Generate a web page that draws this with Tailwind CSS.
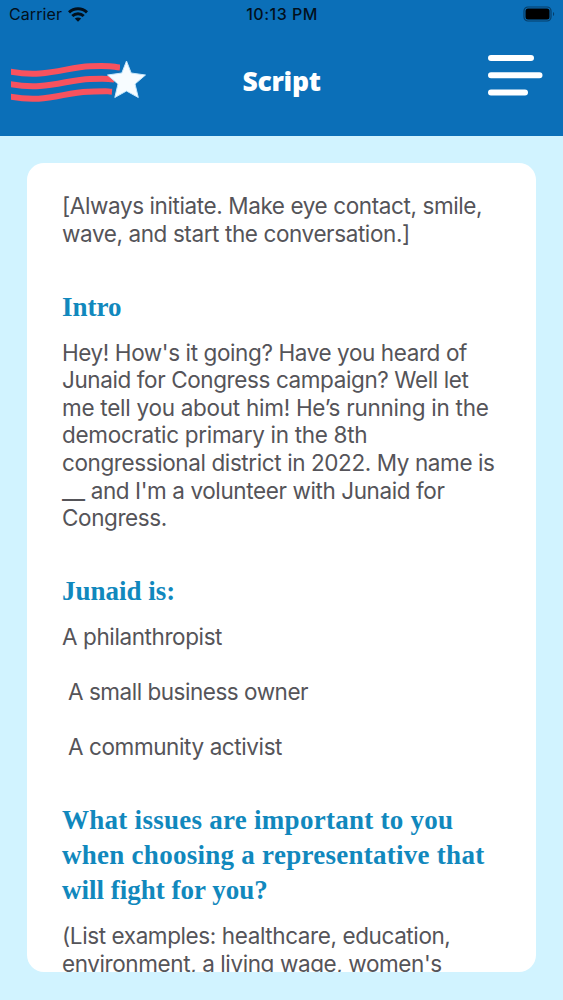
<!DOCTYPE html>
<html lang="en">
<head>
    <meta charset="UTF-8">
    <meta name="viewport" content="width=device-width, initial-scale=1.0">
    <title>Script</title>
    <script src="https://cdn.jsdelivr.net/npm/@tailwindcss/browser@4"></script>
</head>
<body class="h-screen flex flex-col overflow-hidden bg-[#d1f3ff] font-['Inter',sans-serif]">
    <header class="h-[136px] shrink-0 bg-[#0b6fb8]">
        <!-- Status bar -->
        <div class="h-7 grid grid-cols-3 items-center pl-[9px] pr-2 text-[#02101c]">
            <div class="flex items-center gap-[6px]">
                <span class="text-base tracking-[0.1px]">Carrier</span>
                <svg class="w-5 h-[15px]" viewBox="0 0 20 15" fill="none" stroke="currentColor" stroke-width="3">
                    <path d="M1 5.3C6 .5 14 .5 19 5.3"/>
                    <path d="M4.300 9c3.200-3.100 8.200-3.100 11.400 0"/>
                    <path d="M10 14.800 6.800 11.600c1.800-1.600 4.600-1.600 6.400 0z" fill="currentColor" stroke="none"/>
                </svg>
            </div>
            <span class="text-center text-base font-medium tracking-[0.5px] whitespace-nowrap">10:13 PM</span>
            <svg class="w-8 h-4 justify-self-end" viewBox="0 0 32 16">
                <rect x="1" y="1" width="27" height="14" rx="4" fill="none" stroke="#063e69" stroke-width="1.2"/>
                <rect x="2.5" y="2.5" width="24" height="11" rx="2.5"/>
                <path d="M30 6c1.6.6 1.6 3.4 0 4z" fill="#063e69"/>
            </svg>
        </div>
        <!-- Nav bar -->
        <div class="h-[108px] grid grid-cols-[150px_1fr_150px] items-start pt-[27px]">
            <svg class="w-[150px] h-[52px]" viewBox="0 55 150 52">
                <clipPath id="flag"><path d="M11 55h109v52H11z"/></clipPath>
                <g fill="none" stroke="#f8525e" stroke-width="6" clip-path="url(#flag)">
                    <path d="M7 71C45 79 66 67 90 66.300S110 66.300 120 67.500"/>
                    <path d="M7 83.500C45 91.500 66 79.500 90 79S104 79 114 79.500"/>
                    <path d="M7 96C45 104 62 92.500 88 91.700S104 91.200 112 91.800"/>
                </g>
                <path d="M126.500 61 131.200 73 145.500 75 135 84 138.300 97.500 126.500 91 114.800 97.500 118 84 107.500 75 121.800 73z" fill="#f7fcff" stroke="#c4e6fb" stroke-linejoin="round"/>
            </svg>
            <h1 class="pt-[8px] text-center font-['Open_Sans',sans-serif] text-[26.5px] leading-[36px] font-extrabold tracking-[-0.3px] text-white">Script</h1>
            <svg class="w-[55px] h-[42px] justify-self-end mr-5" viewBox="0 0 55 42" fill="none" stroke="white" stroke-width="6" stroke-linecap="round">
                <path d="M3 3h40M3 20.300h48.500M3 37.500h34"/>
            </svg>
        </div>
    </header>

    <main class="flex-1 min-h-0 px-[27px] py-[27px] pb-7">
        <div class="h-full overflow-hidden rounded-[17px] bg-white px-[35px] pt-[29px] text-[22.5px] leading-[27.6px] tracking-[-0.4px] text-[#555459] whitespace-nowrap">
            <p>[Always initiate. Make eye contact, smile,<br>wave, and start the conversation.]</p>

            <h2 class="mt-[42.5px] mb-[14px] font-['Liberation_Serif',serif] text-[27px] leading-[35px] font-bold tracking-normal text-[#1188bd]">Intro</h2>
            <p>Hey! How's it going? Have you heard of<br>Junaid for Congress campaign? Well let<br><span class="tracking-[-0.27px]">me tell you about him! He’s running in the</span><br><span class="tracking-[-0.3px]">democratic primary in the 8th</span><br>congressional district in 2022. My name is<br><span class="text-[26px] leading-none tracking-[-0.5px]">__</span> and I'm a volunteer with Junaid for<br>Congress.</p>

            <h2 class="mt-[42px] mb-[14px] font-['Liberation_Serif',serif] text-[27px] leading-[35px] font-bold tracking-normal text-[#1188bd]">Junaid is:</h2>
            <ul class="space-y-[27.5px]">
                <li>A philanthropist</li>
                <li class="pl-[6px] tracking-[-0.48px]">A small business owner</li>
                <li class="pl-[6px]">A community activist</li>
            </ul>

            <h2 class="mt-[42px] mb-[14px] font-['Liberation_Serif',serif] text-[27px] leading-[35.2px] font-bold tracking-[0.27px] text-[#1188bd]">What issues are important to you<br>when choosing a representative that<br><span class="tracking-normal">will fight for you?</span></h2>
            <p>(List examples: healthcare, education,<br>environment, a living wage, women's</p>
        </div>
    </main>
</body>
</html>
